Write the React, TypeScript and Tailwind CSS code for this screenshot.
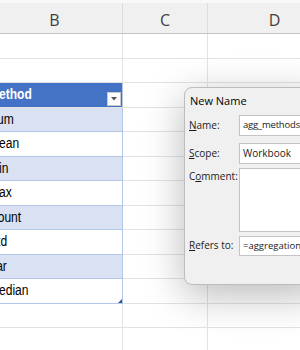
import React from 'react';

const cellFont = { fontFamily: "'Liberation Sans', Arial, sans-serif" };
const uiFont = { fontFamily: "'Open Sans', 'Noto Sans', sans-serif" };

const methods = ['Sum', 'Mean', 'Min', 'Max', 'Count', 'Std', 'Var', 'Median'];

const Row: React.FC<{ b: React.ReactNode; bClass?: string }> = ({ b, bClass }) => (
  <div className="flex h-[24.5px] border-b border-[#e3e3e3] -ml-[13px]">
    <div className={`w-[136px] shrink-0 border-r ${bClass ?? 'border-[#e3e3e3]'}`}>{b}</div>
    <div className="w-[85px] shrink-0 border-r border-[#e3e3e3]" />
    <div className="w-[134px] shrink-0 border-r border-[#e3e3e3]" />
  </div>
);

export default function App() {
  return (
    <div className="relative w-[300px] h-[350px] overflow-hidden bg-white" style={cellFont}>
      {/* column headers */}
      <div className="h-[34px] bg-[#f0f0f0] border-t-[3px] border-t-[#f7f8fa] border-b border-b-[#c4c4c4] flex -ml-[13px]" style={uiFont}>
        <div className="w-[136px] shrink-0 border-r border-[#dcdcdc] flex items-center justify-center pt-[4px] text-[16px] text-[#404040]">B</div>
        <div className="w-[85px] shrink-0 border-r border-[#dcdcdc] flex items-center justify-center pt-[4px] text-[16px] text-[#404040]">C</div>
        <div className="w-[134px] shrink-0 border-r border-[#dcdcdc] flex items-center justify-center pt-[4px] text-[16px] text-[#404040]">D</div>
      </div>

      <Row b={null} />
      <Row b={null} />

      {/* table header */}
      <div className="flex h-[24.5px] border-b border-[#e3e3e3] -ml-[13px]">
        <div className="w-[136px] shrink-0 bg-[#4472c4] border-r border-[#b4c6e7] flex items-center justify-between pl-[2px] pr-[1px]">
          <span className="inline-block origin-left scale-x-[0.86] text-white font-bold text-[14px]">Method</span>
          <span className="self-end mb-[1px] w-[14px] h-[14px] bg-white border border-[#c9c9c9] flex items-center justify-center">
            <svg width="6" height="4" viewBox="0 0 6 4"><path d="M0 0h6L3 3.5z" fill="#555" /></svg>
          </span>
        </div>
        <div className="w-[85px] shrink-0 border-r border-[#e3e3e3]" />
        <div className="w-[134px] shrink-0 border-r border-[#e3e3e3]" />
      </div>

      {methods.map((m, i) => (
        <div key={m} className="flex h-[24.5px] -ml-[13px]">
          <div
            className={`relative w-[136px] shrink-0 border-r border-b border-[#b4c6e7] flex items-center pl-[2px] text-[14px] text-black ${
              i % 2 === 0 ? 'bg-[#d9e1f2]' : 'bg-white'
            }`}
          >
            <span className="inline-block origin-left scale-x-[0.86]">{m}</span>
            {i === methods.length - 1 && (
              <svg className="absolute right-[0px] bottom-[0px]" width="4" height="4" viewBox="0 0 4 4">
                <path d="M4 0v4H0z" fill="#2f5597" />
              </svg>
            )}
          </div>
          <div className="w-[85px] shrink-0 border-r border-b border-[#e3e3e3]" />
          <div className="w-[134px] shrink-0 border-r border-b border-[#e3e3e3]" />
        </div>
      ))}

      <Row b={null} />
      <Row b={null} />

      {/* New Name dialog */}
      <div
        className="absolute left-[184px] top-[87px] w-[140px] h-[198px] rounded-[8px] bg-[#f0f0f0] border border-[#bdbdbd] shadow-[0_10px_40px_rgba(0,0,0,0.28)] text-[#1b1b1b]"
        style={uiFont}
      >
        <div className="h-[26px] flex items-center pl-[5px] text-[11px] text-black">New Name</div>
        <div className="flex flex-col pl-[4px] text-[10px]">
          <div className="flex mt-[1px]">
            <div className="w-[50px] shrink-0 pt-[3px]"><span className="underline">N</span>ame:</div>
            <div className="flex-1 h-[21px] bg-white border border-[#c3c3c3] flex items-center pl-[3px] text-[9.5px] tracking-[-0.2px]">
              agg_methods<span className="inline-block w-px h-[12px] bg-black" />
            </div>
          </div>
          <div className="flex mt-[7px]">
            <div className="w-[50px] shrink-0 pt-[3px]"><span className="underline">S</span>cope:</div>
            <div className="flex-1 h-[21px] bg-white border border-[#c3c3c3] flex items-center pl-[3px]">Workbook</div>
          </div>
          <div className="flex mt-[4px]">
            <div className="w-[50px] shrink-0 pt-[1px]">C<span className="underline">o</span>mment:</div>
            <div className="flex-1 h-[64px] bg-white border border-[#c3c3c3]" />
          </div>
          <div className="flex mt-[4px]">
            <div className="w-[50px] shrink-0 pt-[2px]"><span className="underline">R</span>efers to:</div>
            <div className="flex-1 h-[20px] bg-white border border-[#c3c3c3] flex items-center pl-[3px] whitespace-nowrap overflow-hidden text-[9.5px]">=aggregations!</div>
          </div>
        </div>
      </div>
    </div>
  );
}
